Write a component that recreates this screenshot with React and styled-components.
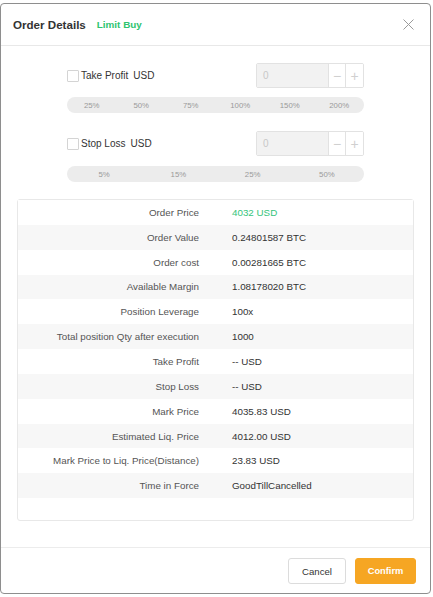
import React from "react";
import styled, { createGlobalStyle } from "styled-components";

const Global = createGlobalStyle`
  html, body { margin: 0; padding: 0; background: #fff; }
  body { font-family: "Liberation Sans", Arial, sans-serif; color: #333; }
  * { box-sizing: border-box; }
`;

const Modal = styled.div`
  margin-top: 3px;
  width: 431px;
  height: 591px;
  background: #fff;
  border: 1px solid #8e8e8e;
  border-radius: 4px;
  display: flex;
  flex-direction: column;
`;

const Header = styled.div`
  height: 42px;
  border-bottom: 1px solid #e8e8e8;
  display: flex;
  align-items: center;
  padding: 0 12px 0 12px;
  flex-shrink: 0;
`;

const Title = styled.div`
  font-size: 11.6px;
  font-weight: 700;
  color: #333;
`;

const SubTitle = styled.div`
  font-size: 9.9px;
  font-weight: 700;
  color: #2ec46f;
  margin-left: 11px;
`;

const Close = styled.button`
  margin-left: auto;
  width: 16px;
  height: 16px;
  padding: 0;
  border: 0;
  background: transparent;
  display: flex;
  align-items: center;
  justify-content: center;
  margin-right: 2px;
`;

const Body = styled.div`
  flex: 1;
  padding: 17px 16px 24px;
  display: flex;
  flex-direction: column;
`;

const Controls = styled.div`
  width: 297px;
  align-self: center;
  display: flex;
  flex-direction: column;
`;

const FieldRow = styled.div`
  height: 25px;
  display: flex;
  align-items: center;
  justify-content: space-between;
  margin-top: ${(p) => p.$mt || 0}px;
`;

const CheckLabel = styled.label`
  display: flex;
  align-items: center;
  font-size: 10px;
  color: #333;
`;

const Box = styled.span`
  width: 12px;
  height: 12px;
  border: 1px solid #d4d4d4;
  border-radius: 1px;
  background: #fff;
  margin-right: 2px;
`;

const Unit = styled.span`
  margin-left: 5px;
`;

const Stepper = styled.div`
  width: 108px;
  height: 25px;
  display: flex;
  border: 1px solid #e2e2e2;
  border-radius: 2px;
  overflow: hidden;
`;

const StepInput = styled.div`
  flex: 1;
  background: #f2f2f2;
  font-size: 10px;
  color: #c8c8c8;
  display: flex;
  align-items: center;
  padding-left: 6px;
`;

const StepBtn = styled.div`
  width: ${(p) => p.$w}px;
  border-left: 1px solid #e2e2e2;
  background: #fff;
  color: #d0d0d0;
  font-size: 14px;
  display: flex;
  align-items: center;
  justify-content: center;
  font-weight: 300;
`;

const PercentBar = styled.div`
  height: 16px;
  margin-top: ${(p) => p.$mt}px;
  border-radius: 8px;
  background: #ececec;
  display: grid;
  grid-template-columns: repeat(${(p) => p.$n}, 1fr);
  align-items: center;
`;

const Pct = styled.span`
  text-align: center;
  font-size: 7.8px;
  color: #9a9a9a;
`;

const Table = styled.div`
  margin-top: 17px;
  border: 1px solid #e8e8e8;
  border-radius: 3px;
  padding-bottom: 22px;
`;

const Row = styled.div`
  height: 24.85px;
  display: grid;
  grid-template-columns: 181px 1fr;
  column-gap: 33px;
  align-items: center;
  font-size: 9.8px;
  background: ${(p) => (p.$alt ? "#f7f7f7" : "#fff")};
`;

const Label = styled.span`
  text-align: right;
  color: #555;
`;

const Value = styled.span`
  color: ${(p) => (p.$green ? "#35c47b" : "#333")};
`;

const Footer = styled.div`
  border-top: 1px solid #ececec;
  padding: 10px 14px 9px;
  display: flex;
  justify-content: flex-end;
  gap: 9px;
  flex-shrink: 0;
`;

const Button = styled.button`
  height: 26px;
  width: ${(p) => p.$w}px;
  border-radius: 3px;
  font-family: "Liberation Sans", Arial, sans-serif;
  font-size: ${(p) => (p.$primary ? "9.3px" : "9.6px")};
  font-weight: ${(p) => (p.$primary ? 700 : 400)};
  color: ${(p) => (p.$primary ? "#fff" : "#333")};
  background: ${(p) => (p.$primary ? "#f6a623" : "#fff")};
  border: 1px solid ${(p) => (p.$primary ? "#f6a623" : "#dcdcdc")};
  padding: 0;
`;

const rows = [
  ["Order Price", "4032 USD", true],
  ["Order Value", "0.24801587 BTC"],
  ["Order cost", "0.00281665 BTC"],
  ["Available Margin", "1.08178020 BTC"],
  ["Position Leverage", "100x"],
  ["Total position Qty after execution", "1000"],
  ["Take Profit", "-- USD"],
  ["Stop Loss", "-- USD"],
  ["Mark Price", "4035.83 USD"],
  ["Estimated Liq. Price", "4012.00 USD"],
  ["Mark Price to Liq. Price(Distance)", "23.83 USD"],
  ["Time in Force", "GoodTillCancelled"],
];

function Field({ label, mt }) {
  return (
    <FieldRow $mt={mt}>
      <CheckLabel>
        <Box />
        {label}
        <Unit>USD</Unit>
      </CheckLabel>
      <Stepper>
        <StepInput>0</StepInput>
        <StepBtn $w={17}>−</StepBtn>
        <StepBtn $w={18}>+</StepBtn>
      </Stepper>
    </FieldRow>
  );
}

export default function App() {
  const tp = ["25%", "50%", "75%", "100%", "150%", "200%"];
  const sl = ["5%", "15%", "25%", "50%"];
  return (
    <>
      <Global />
      <Modal>
        <Header>
          <Title>Order Details</Title>
          <SubTitle>Limit Buy</SubTitle>
          <Close aria-label="close">
            <svg width="11" height="11" viewBox="0 0 11 11">
              <path d="M0.5 0.5 L10.5 10.5 M10.5 0.5 L0.5 10.5" stroke="#9a9a9a" strokeWidth="1" fill="none" />
            </svg>
          </Close>
        </Header>
        <Body>
          <Controls>
            <Field label="Take Profit" mt={0} />
            <PercentBar $mt={9} $n={tp.length}>
              {tp.map((t) => (
                <Pct key={t}>{t}</Pct>
              ))}
            </PercentBar>
            <Field label="Stop Loss" mt={18} />
            <PercentBar $mt={10} $n={sl.length}>
              {sl.map((t) => (
                <Pct key={t}>{t}</Pct>
              ))}
            </PercentBar>
          </Controls>
          <Table>
            {rows.map(([l, v, g], i) => (
              <Row key={l} $alt={i % 2 === 1}>
                <Label>{l}</Label>
                <Value $green={g}>{v}</Value>
              </Row>
            ))}
          </Table>
        </Body>
        <Footer>
          <Button $w={58}>Cancel</Button>
          <Button $w={61} $primary>
            Confirm
          </Button>
        </Footer>
      </Modal>
    </>
  );
}
